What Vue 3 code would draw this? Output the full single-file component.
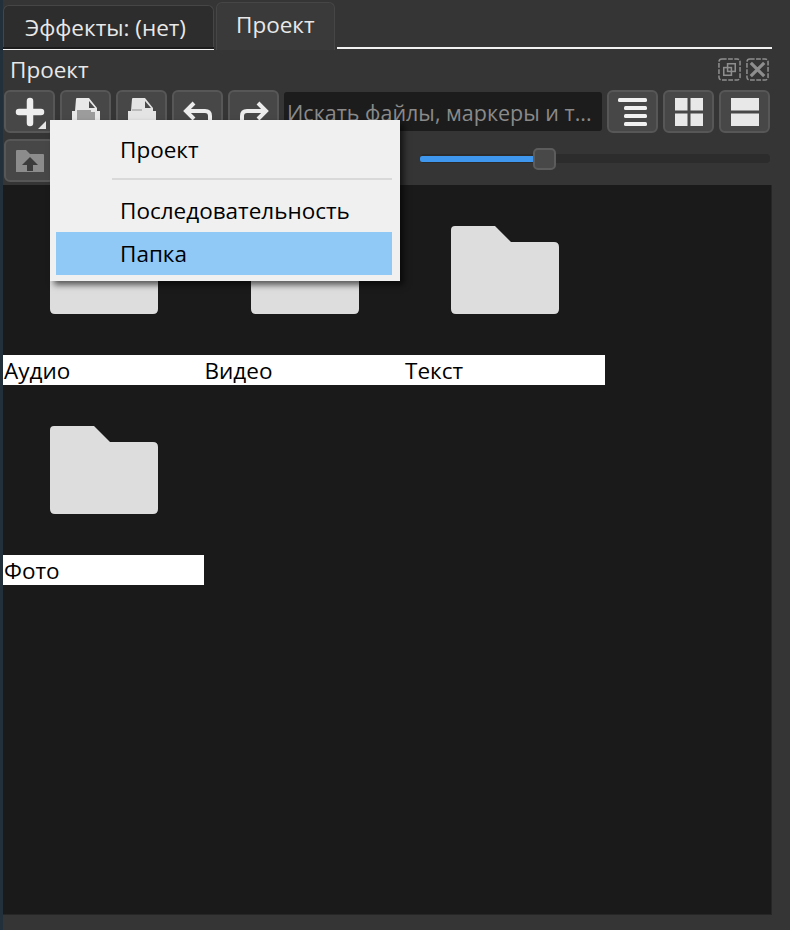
<template>
  <div class="app">
    <div class="tabs">
      <div class="tab">Эффекты: (нет)</div>
      <div class="tab active">Проект</div>
      <div class="tab-rest"></div>
    </div>

    <div class="title-row">
      <span class="title">Проект</span>
      <div class="win-btns">
        <svg width="23" height="23" viewBox="0 0 24 24" fill="none" stroke="#8e8e8e" stroke-width="1.6">
          <rect x="1" y="1" width="22" height="22" rx="3" stroke-dasharray="5 1.5" />
          <rect x="6" y="10" width="8" height="8" />
          <rect x="10" y="6" width="8" height="8" />
        </svg>
        <svg width="23" height="23" viewBox="0 0 24 24" fill="none" stroke="#8e8e8e" stroke-width="1.6">
          <rect x="1" y="1" width="22" height="22" rx="3" stroke-dasharray="5 1.5" />
          <path d="M5 5 L19 19 M19 5 L5 19" stroke-width="3.4" />
        </svg>
      </div>
    </div>

    <div class="toolbar">
      <button class="btn">
        <svg class="soft" width="30" height="30" viewBox="0 0 30 30">
          <path d="M15 4 V26 M4 15 H26" stroke="#eee" stroke-width="6.5" stroke-linecap="round" />
        </svg>
        <span class="corner"></span>
      </button>
      <button class="btn">
        <svg class="soft" width="30" height="30" viewBox="0 0 30 30">
          <path d="M5 2 Q5 1 6 1 H18 L26 11 V14 H29 V30 H1 V14 H4 Z" fill="#e8e8e8" />
          <path d="M18 4 L18 11 L24 11 Z" fill="#4a4a4a" />
          <path d="M6 13 H20 V15 H24 V30 H6 Z" fill="#9c9c9c" />
        </svg>
      </button>
      <button class="btn">
        <svg class="soft" width="30" height="30" viewBox="0 0 30 30">
          <path d="M5 2 Q5 1 6 1 H18 L26 11 V14 H29 V30 H1 V14 H4 Z" fill="#e4e4e4" />
          <path d="M18 4 L18 11 L24 11 Z" fill="#4a4a4a" />
          <path d="M5 13 H15" stroke="#bbb" stroke-width="2" />
        </svg>
      </button>
      <button class="btn">
        <svg class="soft" width="30" height="30" viewBox="0 0 30 30" fill="none" stroke="#ececec" stroke-width="4">
          <path d="M11 6 L3 14 L11 22" />
          <path d="M3 14 H22 Q27 14 27 19 V24" />
        </svg>
      </button>
      <button class="btn">
        <svg class="soft" width="30" height="30" viewBox="0 0 30 30" fill="none" stroke="#ececec" stroke-width="4">
          <path d="M19 6 L27 14 L19 22" />
          <path d="M27 14 H8 Q3 14 3 19 V24" />
        </svg>
      </button>
      <div class="search">Искать файлы, маркеры и т...</div>
      <button class="btn">
        <svg class="soft" width="30" height="30" viewBox="0 0 30 30" fill="#f0f0f0">
          <rect x="0" y="1" width="29" height="4" rx="1.5" />
          <rect x="6" y="9" width="23" height="4" rx="1.5" />
          <rect x="6" y="17" width="23" height="4" rx="1.5" />
          <rect x="6" y="25" width="23" height="4" rx="1.5" />
        </svg>
      </button>
      <button class="btn">
        <svg class="soft" width="30" height="30" viewBox="0 0 30 30" fill="#e8e8e8">
          <rect x="1" y="1" width="12.5" height="12.5" />
          <rect x="16.5" y="1" width="12.5" height="12.5" />
          <rect x="1" y="16.5" width="12.5" height="12.5" />
          <rect x="16.5" y="16.5" width="12.5" height="12.5" />
        </svg>
      </button>
      <button class="btn">
        <svg class="soft" width="30" height="30" viewBox="0 0 30 30" fill="#e8e8e8">
          <rect x="1" y="1" width="28" height="12.5" />
          <rect x="1" y="16.5" width="28" height="12.5" />
        </svg>
      </button>
    </div>

    <div class="toolbar second">
      <button class="btn">
        <svg class="soft" width="30" height="24" viewBox="0 0 30 24">
          <path d="M1 2 Q1 1 2 1 H11 L15 5 H28 Q29 5 29 6 V23 H1 Z" fill="#8c8c8c" />
          <path d="M15 8 L23 16 H18 V22 H12 V16 H7 Z" fill="#3c3c3c" />
        </svg>
      </button>
      <div class="slider">
        <div class="slider-fill"></div>
        <div class="slider-thumb"></div>
      </div>
    </div>

    <div class="browser">
      <div class="cell" v-for="f in folders" :key="f">
        <div class="folder-wrap">
          <svg width="108" height="88" viewBox="0 0 108 88">
            <path d="M4 0 H44 L60 16 H103 Q108 16 108 21 V83 Q108 88 103 88 H5 Q0 88 0 83 V4 Q0 0 4 0 Z" fill="#dddddd" />
          </svg>
        </div>
        <div class="label">{{ f }}</div>
      </div>
    </div>

    <div class="menu">
      <div class="menu-item">Проект</div>
      <div class="menu-sep"></div>
      <div class="menu-item">Последовательность</div>
      <div class="menu-item hl">Папка</div>
    </div>
  </div>
</template>

<script setup>
const folders = ['Аудио', 'Видео', 'Текст', 'Фото']
</script>

<style>
html, body {
  margin: 0;
  background: #353535;
}
</style>

<style scoped>
.app {
  position: relative;
  width: 790px;
  height: 930px;
  overflow: hidden;
  background: #353535;
  box-shadow: inset 3px 0 0 #22303c;
  font-family: "Open Sans", "Noto Sans", sans-serif;
  color: #e8e8e8;
  font-size: 22.5px;
}

.tabs {
  display: flex;
  align-items: flex-end;
  height: 50px;
  padding-left: 3px;
  width: 772px;
  box-sizing: border-box;
}
.tab {
  box-sizing: border-box;
  width: 211px;
  height: 42px;
  padding: 6px 0 0 21px;
  margin-bottom: 3px;
  margin-right: 2px;
  background: #2d2d2d;
  border: 1px solid #464646;
  border-bottom: none;
  border-radius: 6px 6px 0 0;
  box-shadow: 0 2px 0 #1c1c1c, 0 3px 0 #f2f2f2;
  white-space: nowrap;
}
.tab.active {
  width: 119px;
  height: 48px;
  margin-bottom: 0;
  margin-right: 2px;
  padding: 6px 0 0 19px;
  background: #3a3a3a;
  box-shadow: none;
}
.tab-rest {
  flex: 1;
  height: 2px;
  margin-bottom: 1px;
  background: #f2f2f2;
}

.title-row {
  display: flex;
  align-items: center;
  justify-content: space-between;
  height: 40px;
  padding: 0 21px 2px 10px;
  box-sizing: border-box;
  width: 790px;
}
.win-btns {
  display: flex;
  gap: 5px;
}
.win-btns svg {
  display: block;
}

.toolbar {
  display: flex;
  align-items: center;
  gap: 5px;
  padding-left: 4px;
  height: 43px;
}
.toolbar.second {
  margin-top: 6px;
}
.btn {
  position: relative;
  box-sizing: border-box;
  width: 51px;
  height: 43px;
  padding: 0;
  display: flex;
  align-items: center;
  justify-content: center;
  background: #474747;
  border: 2px solid #575757;
  border-radius: 6px;
}
.soft {
  filter: blur(0.5px);
}
.corner {
  position: absolute;
  right: 7px;
  bottom: 2px;
  border-style: solid;
  border-width: 0 0 8px 8px;
  border-color: transparent transparent #e6e6e6 transparent;
}
.search {
  box-sizing: border-box;
  width: 318px;
  height: 39px;
  padding: 6px 0 0 3px;
  background: #1c1c1c;
  border-radius: 3px;
  color: #8a8a8a;
  font-size: 21.5px;
  white-space: nowrap;
  overflow: hidden;
}

.slider {
  position: relative;
  box-sizing: border-box;
  width: 350px;
  height: 9px;
  padding: 2px 0 1px;
  margin-left: 360px;
  margin-top: -4px;
  background: #2c2c2c;
  border-radius: 4px;
}
.slider-fill {
  width: 113px;
  height: 100%;
  background: #3f97ee;
  border-radius: 2px 0 0 2px;
}
.slider-thumb {
  position: absolute;
  left: 113px;
  top: -6px;
  box-sizing: border-box;
  width: 23px;
  height: 22px;
  background: #484848;
  border: 2px solid #5c5c5c;
  border-radius: 5px;
}

.browser {
  box-sizing: border-box;
  width: 769px;
  height: 730px;
  margin: 3px 0 0 3px;
  display: grid;
  grid-template-columns: repeat(3, 200.5px);
  grid-auto-rows: 200px;
  align-content: start;
  background: #1a1a1a;
  border-right: 1px solid #262626;
  border-bottom: 1px solid #262626;
}
.cell {
  display: flex;
  flex-direction: column;
}
.folder-wrap {
  height: 171px;
  box-sizing: border-box;
  padding: 41px 0 0 47px;
}
.folder-wrap svg {
  display: block;
}
.label {
  height: 30px;
  line-height: 32px;
  background: #fff;
  color: #000;
  font-size: 22.5px;
  padding-left: 1px;
}

.menu {
  position: absolute;
  left: 50px;
  top: 120px;
  box-sizing: border-box;
  width: 350px;
  height: 161px;
  padding: 8px 8px 6px 6px;
  background: #f0f0f0;
  color: #000;
  font-size: 22.5px;
  box-shadow: 4px 4px 6px rgba(0, 0, 0, 0.6);
}
.menu-item {
  height: 43px;
  line-height: 44px;
  padding-left: 64px;
}
.menu-item.hl {
  background: #90c8f6;
}
.menu-sep {
  height: 2px;
  margin: 7px 0 9px 56px;
  background: #d9d9d9;
}
</style>
